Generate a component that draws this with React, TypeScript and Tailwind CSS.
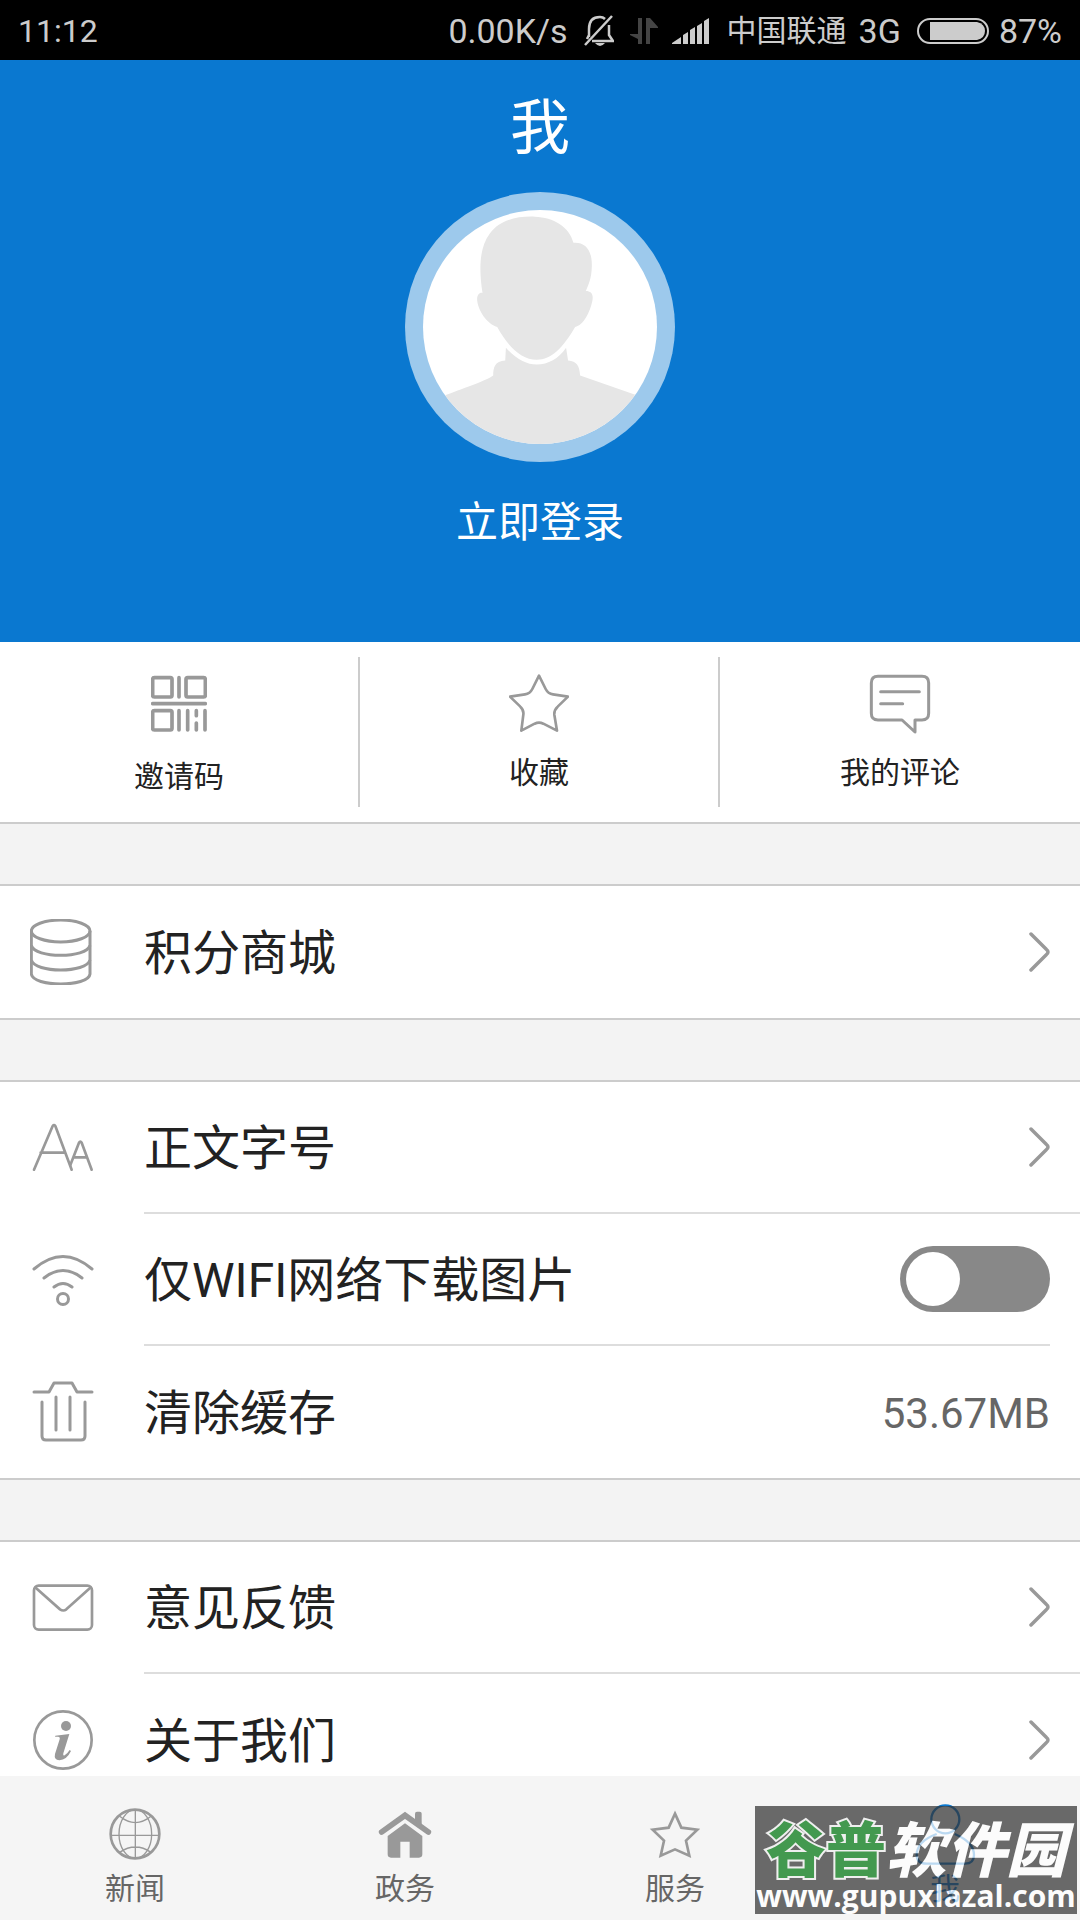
import { useState } from "react";
import type { ReactNode } from "react";
import clsx from "clsx";

const rowIcon = "w-[66px] h-[66px] fill-none stroke-[#999]";

/* Row icons */
const DatabaseIcon = () => (
  <svg viewBox="90 147 198 198" className={rowIcon} strokeWidth="9">
    <ellipse cx="182" cy="183" rx="88" ry="33" />
    <path d="M94 183V312C98 352 266 352 270 312V183" />
    <path d="M94 226C104 266 260 266 270 226M94 270C104 310 260 310 270 270" />
  </svg>
);

const FontSizeIcon = () => (
  <svg viewBox="90 736 198 198" className={rowIcon} strokeWidth="8" strokeLinecap="round" strokeLinejoin="round">
    <path d="M102 900L158 769Q162 764 166 769L215 900M122 849H196" />
    <path d="M211 886L237 819Q241 812 245 819L275 900M222 863H260" />
  </svg>
);

const WifiIcon = () => (
  <svg viewBox="30 1247 66 66" className={rowIcon} strokeWidth="3" strokeLinecap="round">
    <path d="M34 1269Q63 1244 92 1269M44 1278Q63 1263 82 1278M54 1287Q63 1280 72 1287" />
    <circle cx="63" cy="1299" r="5.500" />
  </svg>
);

const TrashIcon = () => (
  <svg viewBox="30 1379 66 66" className={rowIcon} strokeWidth="3" strokeLinecap="round" strokeLinejoin="round">
    <path d="M34 1392H49L54 1383H72L77 1392H92" />
    <path d="M42 1402V1436Q42 1440 46 1440H81Q85 1440 85 1436V1402M56 1397V1430M70 1397V1430" />
  </svg>
);

const MailIcon = () => (
  <svg viewBox="90 165 198 198" className={rowIcon} strokeWidth="8" strokeLinecap="round">
    <rect x="102" y="197" width="174" height="132" rx="14" />
    <path d="M107 203L180 268Q190 275 199 268L271 203" />
  </svg>
);

const InfoIcon = () => (
  <svg viewBox="90 560 198 198" className={rowIcon} strokeWidth="8">
    <circle cx="189" cy="659" r="86" />
    <circle cx="198" cy="617" r="15" className="fill-[#999] stroke-none" />
    <path
      className="fill-[#999] stroke-none"
      d="M166 646L208 641L190 699Q188 708 194 705Q202 700 209 689L213 692Q200 719 178 720Q161 719 165 701L179 657Q181 649 174 649H165Z"
    />
  </svg>
);

const Chevron = () => (
  <svg viewBox="0 0 21 40" className="w-[21px] h-10 fill-none stroke-[#999]" strokeWidth="3.500" strokeLinecap="round">
    <path d="M2 2L17.500 17.500Q20.500 20 17.500 22.500L2 38" />
  </svg>
);

/* Quick action icons */
const QrIcon = () => (
  <svg viewBox="153 96 168 192" className="w-14 h-16 fill-none stroke-[#999]" strokeWidth="11" strokeLinecap="round">
    <rect x="158" y="113" width="58" height="58" rx="5" />
    <rect x="258" y="113" width="58" height="58" rx="5" />
    <rect x="158" y="212" width="58" height="58" rx="5" />
    <path d="M237 113V171M158 191H316M237 212V270M263 212V270M289 212V227M289 249V270M315 212V270" />
  </svg>
);

const StarIcon = () => (
  <svg viewBox="1227 96 180 180" className="w-[60px] h-[60px] fill-none stroke-[#999]" strokeWidth="8" strokeLinejoin="round">
    <path d="M1317 107L1337 147Q1344 161 1359 163L1404 170L1373 200Q1362 210 1363 224L1371 272L1330 251Q1317 245 1304 251L1264 272L1270 224Q1272 210 1261 200L1230 170L1275 163Q1290 161 1297 147Z" />
  </svg>
);

const CommentIcon = () => (
  <svg viewBox="870 96 180 180" className="w-[60px] h-[60px] overflow-visible fill-none stroke-[#999]" strokeWidth="9" strokeLinecap="round" strokeLinejoin="round">
    <path d="M894 109H1026Q1046 109 1046 129V220Q1046 240 1026 240H1005V276L966 240H894Q874 240 874 220V129Q874 109 894 109Z" />
    <path d="M902 155H1018M902 191H968" />
  </svg>
);

/* Tab icons */
const tabIcon = "w-[52px] h-[52px] overflow-visible";

const GlobeIcon = () => (
  <svg viewBox="148 115 156 156" className={clsx(tabIcon, "fill-none stroke-[#999]")} strokeWidth="4">
    <circle cx="226" cy="193" r="73" strokeWidth="8" />
    <ellipse cx="227" cy="193" rx="49" ry="73" />
    <path d="M227 120V266M153 197H299M180 140Q227 178 274 140M180 248Q227 216 274 248" />
  </svg>
);

const HomeIcon = () => (
  <svg viewBox="958 115 156 156" className={clsx(tabIcon, "fill-[#999]")}>
    <path d="M966 187L1036 137L1106 187" className="fill-none stroke-[#999]" strokeWidth="17" strokeLinecap="round" />
    <path d="M1066 132Q1066 126 1072 126H1080Q1086 126 1086 132V168L1066 155Z" />
    <path d="M984 199L1036 161L1088 199V254Q1088 264 1078 264H1050V216H1022V264H994Q984 264 984 254Z" />
  </svg>
);

const TabStarIcon = () => (
  <svg viewBox="147 115 156 156" className={clsx(tabIcon, "fill-none stroke-[#999]")} strokeWidth="8">
    <path d="M225 132L244 174L292 180L258 213L268 258L225 239L182 258L192 213L158 180L206 174Z" />
  </svg>
);

const UserIcon = () => (
  <svg viewBox="597 144 156 156" className={clsx(tabIcon, "fill-none stroke-[#0a78d0]")} strokeWidth="7">
    <circle cx="676" cy="178" r="42" />
    <path d="M650 222C615 235 590 255 590 285Q590 311 620 311H735Q762 311 762 285C762 255 735 235 704 222" />
  </svg>
);

const quickActions = [
  { label: "邀请码", icon: QrIcon },
  { label: "收藏", icon: StarIcon },
  { label: "我的评论", icon: CommentIcon },
];

const tabs = [
  { href: "#news", label: "新闻", icon: GlobeIcon },
  { href: "#gov", label: "政务", icon: HomeIcon },
  { href: "#service", label: "服务", icon: TabStarIcon },
  { href: "#me", label: "我", icon: UserIcon, active: true },
];

function StatusBar() {
  return (
    <div className="flex h-[60px] shrink-0 items-center bg-black px-[18px] pt-0.5 text-[34px] leading-none text-[#ccc]">
      <span className="text-[32px]">11:12</span>
      <span className="ml-auto">0.00K/s</span>
      {/* Muted bell */}
      <svg viewBox="0 0 30 32" className="ml-4 w-[30px] h-8 fill-none stroke-[#ccc]" strokeWidth="2.500">
        <path d="M5 22V14Q5 2 16 2Q19 2 21 4M25 10V20L29 26H8M5 20L3 24M1 30L28 1" />
        <path d="M11 28H21Q16 34 11 28Z" className="fill-[#ccc] stroke-none" />
      </svg>
      {/* Data arrows */}
      <svg viewBox="0 0 28 26" className="ml-4 w-7 h-[26px] fill-[#444]">
        <path d="M8 0H12V26H8V21L0 17V16H8ZM16 0H20L28 9V10H20V26H16Z" />
      </svg>
      <svg viewBox="0 0 37 26" className="ml-3.5 w-[37px] h-[26px] fill-[#ccc]">
        <path d="M0 25L9 19V26H0ZM11 17L16 14V26H11ZM18 12L23 9V26H18ZM25 8L30 5V26H25ZM32 3L37 0V26H32Z" />
      </svg>
      <span className="ml-[18px] text-[30px]">中国联通</span>
      <span className="ml-3">3G</span>
      <svg viewBox="0 0 72 26" className="ml-4 w-[72px] h-[26px]">
        <rect x="1" y="1" width="70" height="24" rx="12" className="fill-none stroke-[#ccc]" strokeWidth="2" />
        <path d="M13 4H60Q68 6 68 13Q68 20 60 22H13Z" className="fill-[#ccc]" />
      </svg>
      <span className="ml-2.5">87%</span>
    </div>
  );
}

function Group({ children }: { children: ReactNode }) {
  return <ul className="border-y-2 border-[#ccc] bg-white">{children}</ul>;
}

type RowProps = {
  icon: () => ReactNode;
  label: string;
  divider?: boolean;
  value?: string;
};

function Row({ icon: Icon, label, divider, value }: RowProps) {
  return (
    <li>
      <button className="flex h-[132px] w-full items-stretch pl-[30px] text-left">
        <span className="flex w-[114px] shrink-0 items-center">
          <Icon />
        </span>
        <span className={clsx("flex flex-1 items-center pr-[30px]", divider && "border-b-2 border-[#ddd]")}>
          <span className="flex-1 pt-1 text-[48px] leading-[72px]">{label}</span>
          {value ? <span className="pt-1 text-[42px] leading-[60px] text-[#666]">{value}</span> : <Chevron />}
        </span>
      </button>
    </li>
  );
}

function SwitchRow({ icon: Icon, label }: RowProps) {
  const [checked, setChecked] = useState(false);

  return (
    <li>
      <label className="flex h-[132px] items-stretch pl-[30px] pr-[30px]">
        <span className="flex w-[114px] shrink-0 items-center">
          <Icon />
        </span>
        <span className="flex flex-1 items-center border-b-2 border-[#ddd]">
          <span className="flex-1 pt-1 text-[48px] leading-[72px]">{label}</span>
          <input
            type="checkbox"
            role="switch"
            checked={checked}
            onChange={(e) => setChecked(e.target.checked)}
            className="flex h-[66px] w-[150px] appearance-none items-center rounded-full bg-[#888] px-1.5 before:h-[54px] before:w-[54px] before:rounded-full before:bg-white checked:justify-end checked:bg-[#0a78d0]"
          />
        </span>
      </label>
    </li>
  );
}

export default function App() {
  return (
    <div className="flex h-screen flex-col overflow-hidden bg-[#f3f3f3] font-[Roboto,'Noto_Sans_CJK_SC',sans-serif] text-[#222]">
      <StatusBar />

      <main className="min-h-0 flex-1 overflow-hidden">
        {/* Profile header */}
        <header className="flex flex-col items-center bg-[#0a78d0] pt-1.5 pb-[58px] text-white">
          <h1 className="text-[60px] leading-[126px]">我</h1>
          <div className="h-[270px] w-[270px] rounded-full bg-white/60 p-[18px]">
            <svg viewBox="130 390 700 700" className="h-full w-full rounded-full bg-white fill-[#e6e6e6]">
              <path d="M308 638C296 560 300 500 330 460C360 420 410 408 465 410C520 412 568 440 580 488C615 485 637 510 635 560C634 595 625 615 617 632C632 632 640 640 637 660C630 695 610 735 585 740C550 800 515 838 470 838C425 838 385 800 352 740C320 730 295 690 292 660C291 645 298 636 308 638Z" />
              <path d="M378 802C410 838 440 852 470 852C505 852 535 835 558 802L564 840C590 842 598 855 600 885L765 943L830 1000V1090H130V1000L200 943C260 920 325 898 340 885C340 860 345 842 376 840Z" />
            </svg>
          </div>
          <button className="text-[42px] leading-[122px]">立即登录</button>
        </header>

        {/* Quick actions */}
        <div className="grid grid-cols-3 border-b-2 border-[#ccc] bg-white py-[15px]">
          {quickActions.map((item, i) => (
            <button
              key={item.label}
              className={clsx("flex h-[150px] flex-col items-center gap-[18px] pt-[15px]", i < 2 && "border-r-2 border-[#ccc]")}
            >
              <item.icon />
              <span className="text-[30px] leading-[46px]">{item.label}</span>
            </button>
          ))}
        </div>

        {/* Settings */}
        <div className="flex flex-col gap-[60px] pt-[60px]">
          <Group>
            <Row icon={DatabaseIcon} label="积分商城" />
          </Group>
          <Group>
            <Row icon={FontSizeIcon} label="正文字号" divider />
            <SwitchRow icon={WifiIcon} label="仅WIFI网络下载图片" />
            <Row icon={TrashIcon} label="清除缓存" value="53.67MB" />
          </Group>
          <Group>
            <Row icon={MailIcon} label="意见反馈" divider />
            <Row icon={InfoIcon} label="关于我们" />
          </Group>
        </div>
      </main>

      {/* Tab bar */}
      <nav className="relative grid h-36 shrink-0 grid-cols-4 bg-[#f5f5f5]">
        {tabs.map((tab) => (
          <a
            key={tab.href}
            href={tab.href}
            className={clsx("flex flex-col items-center gap-1.5 pt-8", tab.active ? "text-[#0a78d0]" : "text-[#666]")}
          >
            <tab.icon />
            <span className="text-[30px] leading-[46px]">{tab.label}</span>
          </a>
        ))}

        {/* Site stamp */}
        <div className="pointer-events-none absolute right-[3px] bottom-1.5 flex h-[108px] w-[322px] flex-col items-center overflow-hidden bg-[#343434] pt-4 text-white opacity-72">
          <p className="text-[60px] leading-[60px] font-black whitespace-nowrap">
            <span className="text-[#007610] [-webkit-text-stroke:4px_#eee] [paint-order:stroke_fill]">谷普</span>
            <span className="italic">软件园</span>
          </p>
          <p className="font-['Open_Sans',sans-serif] text-[30px] leading-[28px] font-bold">www.gupuxlazal.com</p>
        </div>
      </nav>
    </div>
  );
}
